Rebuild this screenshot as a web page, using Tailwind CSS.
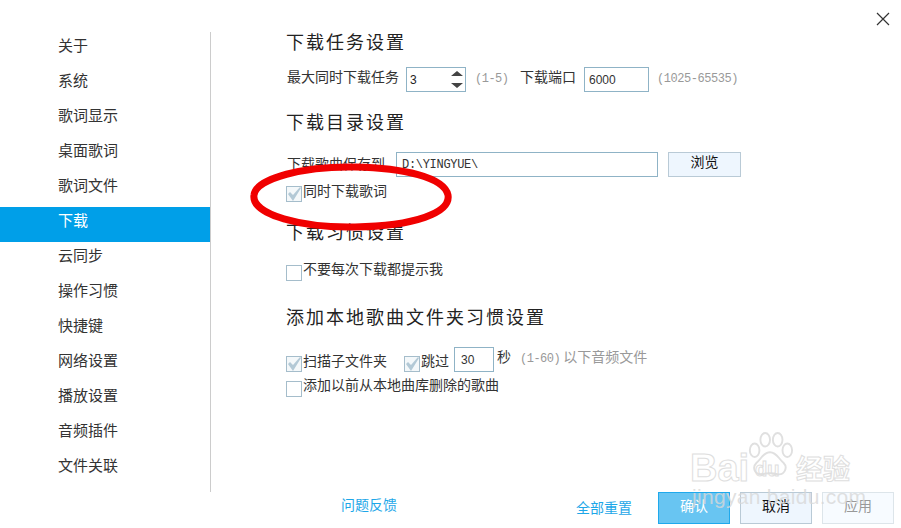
<!DOCTYPE html>
<html lang="zh-CN">

<head>
    <meta charset="UTF-8">
    <title>设置</title>
    <script src="https://cdn.jsdelivr.net/npm/@tailwindcss/browser@4"></script>
</head>

<body class="bg-white overflow-hidden">
    <div class="relative flex w-[901px] h-[528px] overflow-hidden text-[14px] text-[#333] font-['Noto_Sans_CJK_SC','Liberation_Sans',sans-serif]">

        <!-- Sidebar -->
        <div class="w-[211px] pt-[32px] shrink-0">
            <nav class="h-[460px] border-r border-[#ccc] text-[15px]">
                <a class="flex items-center h-[35px] pl-[58px] pb-[8px]">关于</a>
                <a class="flex items-center h-[35px] pl-[58px] pb-[8px]">系统</a>
                <a class="flex items-center h-[35px] pl-[58px] pb-[8px]">歌词显示</a>
                <a class="flex items-center h-[35px] pl-[58px] pb-[8px]">桌面歌词</a>
                <a class="flex items-center h-[35px] pl-[58px] pb-[8px]">歌词文件</a>
                <a class="flex items-center h-[35px] pl-[58px] pb-[8px] bg-[#009fe8] text-white">下载</a>
                <a class="flex items-center h-[35px] pl-[58px] pb-[8px]">云同步</a>
                <a class="flex items-center h-[35px] pl-[58px] pb-[8px]">操作习惯</a>
                <a class="flex items-center h-[35px] pl-[58px] pb-[8px]">快捷键</a>
                <a class="flex items-center h-[35px] pl-[58px] pb-[8px]">网络设置</a>
                <a class="flex items-center h-[35px] pl-[58px] pb-[8px]">播放设置</a>
                <a class="flex items-center h-[35px] pl-[58px] pb-[8px]">音频插件</a>
                <a class="flex items-center h-[35px] pl-[58px] pb-[8px]">文件关联</a>
            </nav>
        </div>

        <!-- Main -->
        <div class="flex-1 flex flex-col pl-[76px] pr-[7px] pt-[27px]">
            <h2 class="h-[30px] -ml-[1px] leading-[28px] text-[18px] tracking-[2px] text-[#222]">下载任务设置</h2>
            <div class="flex items-center h-[25px] mt-[10px]">
                <span class="mb-[6px] w-[119px]">最大同时下载任务</span>
                <div class="relative flex items-center w-[60px] h-[25px] border border-[#8fb3c6] pl-[3px] text-[12px] text-[#222] font-['Liberation_Sans',sans-serif]">
                    3
                    <svg class="absolute right-[1px] top-[2px]" width="14" height="20" viewBox="0 0 14 20"><path d="M1 6 7 1l6 5zM1 13h12l-6 5z" fill="#444"/></svg>
                </div>
                <span class="ml-[9px] w-[45px] mb-[2px] text-[12px] tracking-[-0.5px] text-[#999] font-['Liberation_Mono',monospace]">(1-5)</span>
                <span class="mb-[6px] w-[64px]">下载端口</span>
                <div class="flex items-center w-[65px] h-[25px] border border-[#8fb3c6] pl-[4px] text-[12px] font-['Liberation_Sans',sans-serif]">6000</div>
                <span class="ml-[8px] mb-[2px] text-[12px] tracking-[-0.45px] text-[#999] font-['Liberation_Mono',monospace]">(1025-65535)</span>
            </div>

            <h2 class="h-[30px] -ml-[1px] leading-[28px] mt-[15px] text-[18px] tracking-[2px] text-[#222]">下载目录设置</h2>
            <div class="flex items-center h-[25px] mt-[15px]">
                <span class="mb-[2px] w-[109px]">下载歌曲保存到</span>
                <div class="flex items-center w-[262px] h-[25px] border border-[#8fb3c6] pl-[5px] text-[12px] tracking-[-0.3px] font-['Liberation_Mono',monospace]">D:\YINGYUE\</div>
                <button class="flex items-center justify-center ml-[10px] w-[73px] h-[25px] pb-[6px] border border-[#b9cad6] bg-[#eef6fe] text-[#111]">浏览</button>
            </div>
            <div class="flex items-center h-[16px] mt-[9px] -ml-[1px]">
                <svg width="16" height="16" viewBox="0 0 16 16" class="shrink-0"><rect x=".5" y=".5" width="15" height="15" fill="#f4f8fa" stroke="#a5bdcb"/><path d="M2 8l2-2 3 3 7-8 1 1-8 13z" fill="#b3c9d6"/></svg>
                <span class="ml-[1px] mb-[8px]">同时下载歌词</span>
            </div>

            <h2 class="h-[30px] -ml-[1px] leading-[28px] mt-[15px] text-[18px] tracking-[2px] text-[#222]">下载习惯设置</h2>
            <div class="flex items-center h-[16px] mt-[18px] -ml-[1px]">
                <div class="w-[16px] h-[16px] border border-[#a5bdcb] shrink-0"></div>
                <span class="ml-[1px] mb-[9px]">不要每次下载都提示我</span>
            </div>

            <h2 class="h-[30px] -ml-[1px] leading-[28px] mt-[21px] text-[18px] tracking-[2px] text-[#222]">添加本地歌曲文件夹习惯设置</h2>
            <div class="flex items-end h-[25px] mt-[15px] -ml-[1px]">
                <svg width="16" height="16" viewBox="0 0 16 16" class="shrink-0"><rect x=".5" y=".5" width="15" height="15" fill="#f4f8fa" stroke="#a5bdcb"/><path d="M2 8l2-2 3 3 7-8 1 1-8 13z" fill="#b3c9d6"/></svg>
                <span class="ml-[1px] w-[101px] leading-[16px] mb-[4px]">扫描子文件夹</span>
                <svg width="16" height="16" viewBox="0 0 16 16" class="shrink-0"><rect x=".5" y=".5" width="15" height="15" fill="#f4f8fa" stroke="#a5bdcb"/><path d="M2 8l2-2 3 3 7-8 1 1-8 13z" fill="#b3c9d6"/></svg>
                <span class="ml-[1px] w-[33px] leading-[16px] mb-[4px]">跳过</span>
                <div class="flex items-center w-[40px] h-[25px] border border-[#8fb3c6] pl-[6px] text-[12px] font-['Liberation_Sans',sans-serif]">30</div>
                <span class="ml-[3px] w-[23px] leading-[16px] mb-[8px]">秒</span>
                <span class="leading-[16px] mb-[5px] text-[#999]"><span class="font-['Liberation_Mono',monospace] text-[12px] tracking-[-0.5px]">(1-60)</span> 以下音频文件</span>
            </div>
            <div class="flex items-center h-[16px] mt-[9px] -ml-[1px]">
                <div class="w-[16px] h-[16px] border border-[#a5bdcb] shrink-0"></div>
                <span class="ml-[1px] mb-[10px]">添加以前从本地曲库删除的歌曲</span>
            </div>

            <!-- Footer -->
            <div class="flex h-[32px] mt-[95px]">
                <a class="ml-[54px] mb-[8px] self-center text-[#1ea7e8]">问题反馈</a>
                <a class="ml-auto mb-[2px] self-center mr-[1px] text-[#1ea7e8]">全部重置</a>
                <button class="flex items-center justify-center ml-[25px] w-[72px] h-[32px] pb-[5px] border border-[#1fa9ec] bg-[#68c5f2] text-white">确认</button>
                <button class="flex items-center justify-center ml-[10px] w-[72px] h-[32px] pb-[5px] border border-[#b9cad6] bg-[#eef6fe] text-[#111]">取消</button>
                <button class="flex items-center justify-center ml-[10px] w-[72px] h-[32px] pb-[5px] border border-[#dde5ea] bg-[#f7fbff] text-[#999]">应用</button>
            </div>
        </div>

        <!-- Close -->
        <svg class="absolute left-[876px] top-[12px]" width="14" height="14" viewBox="0 0 14 14"><path d="M1 1l12 12M13 1 1 13" stroke="#333" stroke-width="1.2" fill="none"/></svg>

        <!-- Red annotation -->
        <svg class="absolute left-[245px] top-[158px] pointer-events-none" width="215" height="80" viewBox="0 0 215 80">
            <path d="M9 37C11 20 60 8 110 9c48 1 89 10 93 28 3 18-34 31-93 32C58 70 6 57 9 37z" fill="none" stroke="#f00000" stroke-width="7"/>
        </svg>

        <!-- Baidu watermark -->
        <div class="absolute left-[690px] top-[430px] w-[205px] h-[80px] pointer-events-none">
            <svg class="absolute left-[56px] top-[1px]" width="48" height="52" viewBox="0 0 50 54" fill="none" stroke="#e0e0e0" stroke-width="2">
                <ellipse cx="9" cy="20" rx="5" ry="7"/><ellipse cx="20" cy="9" rx="5" ry="7"/><ellipse cx="33" cy="9" rx="5" ry="7"/><ellipse cx="43" cy="20" rx="5" ry="7"/>
                <path d="M25 22c7 0 9 7 14 11 5 5 1 13-6 12-4-1-5-1-8-1s-5 0-8 1c-8 1-11-7-6-12 5-4 7-11 14-11z"/>
            </svg>
            <span class="absolute left-[0px] top-[14px] text-[38px] leading-[48px] font-bold text-transparent [-webkit-text-stroke:1px_#dedede] font-['Liberation_Sans',sans-serif]">Bai</span>
            <span class="absolute left-[65px] top-[27px] text-[20px] leading-[24px] font-bold text-transparent [-webkit-text-stroke:1px_#dedede] font-['Liberation_Sans',sans-serif]">du</span>
            <span class="absolute left-[106px] top-[20px] text-[27px] leading-[36px] font-bold text-transparent [-webkit-text-stroke:1px_#dedede]">经验</span>
            <span class="absolute left-[2px] top-[55px] text-[21px] leading-[24px] tracking-[0.3px] text-[#d8d8d8]/80 font-['Liberation_Sans',sans-serif]">jingyan.baidu.com</span>
        </div>
    </div>
</body>

</html>
